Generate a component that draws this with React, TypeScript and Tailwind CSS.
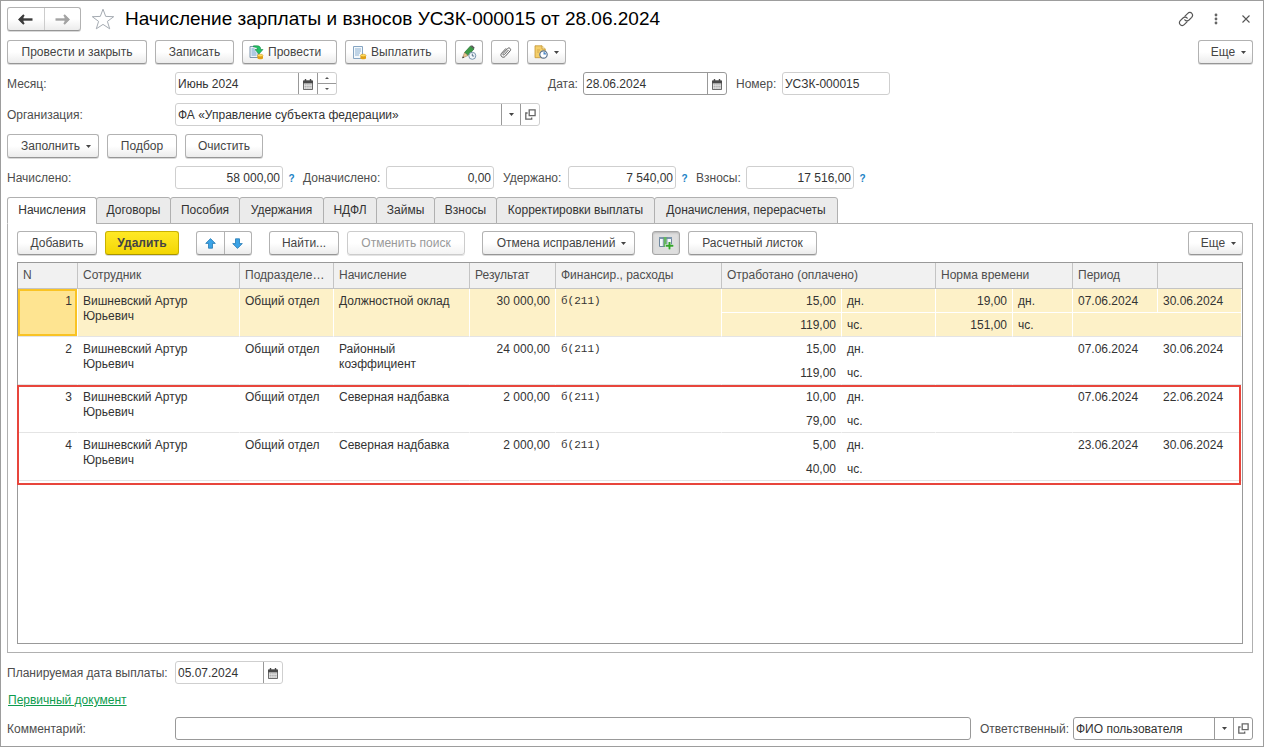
import React, { useState } from "react";

const BTN_FRAME =
  "flex h-6 shrink-0 items-center rounded-[3px] border border-[#b2b2b2] border-b-[#969696] bg-linear-to-b from-white from-50% to-[#ececec] whitespace-nowrap text-[#444] shadow-[0_1px_0_#d9d9d9]";
const BTN = `${BTN_FRAME} justify-center`;
const FIELD = "flex h-[23px] items-stretch overflow-hidden rounded-[3px] border bg-white";
const LIGHT = "border-[#cfcfcf]";
const DARK = "border-[#999]";
const INPUT = "w-full min-w-0 flex-1 bg-transparent px-0.5 pt-0.5 text-[#333] outline-none";
const LABEL = "shrink-0 pt-0.5 whitespace-nowrap";
const SEG = "flex w-[19px] shrink-0 items-center justify-center border-l border-[#999]";

function Caret() {
  return (
    <svg width="5" height="3" viewBox="0 0 5 3" className="shrink-0" aria-hidden="true">
      <path d="M0 0h5L2.500 3z" fill="#444" />
    </svg>
  );
}

function CalendarIcon() {
  return (
    <svg width="10" height="11" viewBox="0 0 10 11" className="mt-px mr-px" aria-hidden="true">
      <path d="M.8 1.500h8.400a.8.8 0 0 1 .8.800v7.900a.8.8 0 0 1-.8.800H.8a.8.8 0 0 1-.8-.8V2.300a.8.8 0 0 1 .8-.8z" fill="#6a6a6a" />
      <path d="M0 2.300a.8.8 0 0 1 .8-.8h8.400a.8.8 0 0 1 .8.800V4.300H0z" fill="#4a4a4a" />
      <path d="M2.500 0v3M7.500 0v3" stroke="#4a4a4a" strokeWidth="1.400" />
      <path d="M1 4.600h8v5.400H1z" fill="#f0f0f0" />
      <path d="M1.600 5.800h7M1.600 7.400h7M1.600 9h7" stroke="#8a8a8a" strokeWidth=".9" strokeDasharray="1.200 .7" />
    </svg>
  );
}

function OpenIcon() {
  return (
    <svg width="11" height="11" viewBox="0 0 11 11" fill="none" stroke="#666" strokeWidth="1.300" aria-hidden="true">
      <path d="M4.200.8h5.900v5.900H4.200z" />
      <path d="M2.600 4H.8v6.100h5.900V8.400" />
    </svg>
  );
}

function NavArrow({ color, flip }: { color: string; flip?: boolean }) {
  return (
    <svg width="15" height="11" viewBox="0 0 15 11" className={flip ? "-scale-x-100" : ""} aria-hidden="true">
      <path d="M14.500 5.500H3" stroke={color} strokeWidth="2.400" />
      <path d="M6 1 1.500 5.500 6 10" fill="none" stroke={color} strokeWidth="2" />
      <path d="M.5 5.500 5.500 1v9z" fill={color} />
    </svg>
  );
}

function Coins() {
  return (
    <g>
      <path d="M8.500 10.500v3c0 1 5.500 1 5.500 0v-3z" fill="#eaa91c" />
      <ellipse cx="11.200" cy="10.500" rx="2.800" ry="1.300" fill="#ffdc5c" stroke="#c98c10" strokeWidth=".5" />
      <path d="M8.500 12.200c0 1.200 5.500 1.200 5.500 0" fill="none" stroke="#c98c10" strokeWidth=".5" />
    </g>
  );
}

function PostIcon() {
  return (
    <svg width="15" height="15" viewBox="0 0 15 15" aria-hidden="true">
      <path d="M1 1.500h8v11H1z" fill="#eef4fa" stroke="#7d95ad" />
      <path d="M2.500 4h3M2.500 6h4M2.500 8h5M2.500 10h5" stroke="#6f9fca" />
      <path d="M4.500.8h3.700c2.500 0 3.500 1.200 3.500 3.700H14L10 9 6 4.500h2.300C8.300 2.600 7 1.900 4.500 2z" fill="#22c065" stroke="#118a43" strokeWidth=".6" />
      <Coins />
    </svg>
  );
}

function PayIcon() {
  return (
    <svg width="15" height="15" viewBox="0 0 15 15" aria-hidden="true">
      <path d="M1.500 1.500h9v12h-9z" fill="#f3f8fc" stroke="#86a5c2" />
      <path d="M3 4h6M3 6h6M3 8h5M3 10h4" stroke="#8bb0d1" />
      <Coins />
    </svg>
  );
}

function PencilClockIcon() {
  return (
    <svg width="16" height="15" viewBox="0 0 16 15" aria-hidden="true">
      <path d="M9.500 1 13 4 7 10.500 3.500 7.500z" fill="#3c9a47" stroke="#24702e" strokeWidth=".7" />
      <path d="M9.500 1 11 .3l2.600 2.200L13 4z" fill="#555" />
      <path d="m3.500 7.500 3.500 3L1.500 13z" fill="#e9c48d" stroke="#8a7250" strokeWidth=".5" />
      <path d="m1.200 13.200.8-2 1.200 1.200z" fill="#333" />
      <circle cx="11.300" cy="10.800" r="3.500" fill="#f2f7fb" stroke="#7894ac" />
      <path d="M11.300 8.600V11h1.900" fill="none" stroke="#58728a" />
    </svg>
  );
}

function ClipIcon() {
  return (
    <svg width="13" height="13" viewBox="0 0 13 13" fill="none" stroke="#5c5c5c" strokeWidth="1" strokeLinecap="round" aria-hidden="true">
      <path d="M9.300 4.200 5.300 8.600c-.9.900-2-.1-1.200-1.100l4.500-5c1.600-1.600 4 .5 2.600 2.300l-5 5.600c-2.300 2.400-5.700-.6-3.700-3.100L6.800 2.600" />
    </svg>
  );
}

function DocClockIcon() {
  return (
    <svg width="14" height="14" viewBox="0 0 14 14" aria-hidden="true">
      <path d="M1 .8h7L11.200 4v8.700H1z" fill="#f4cf6b" stroke="#c49632" strokeWidth=".8" />
      <path d="M8 .8V4h3.200" fill="#fdf0c4" stroke="#c49632" strokeWidth=".8" />
      <path d="M3 5h3M3 7h2" stroke="#d6a94a" />
      <circle cx="9.500" cy="9.500" r="3.700" fill="#fff" stroke="#5d7590" strokeWidth="1.200" />
      <path d="M9.500 7v2.500H12A2.500 2.500 0 0 0 9.500 7z" fill="#4a87c7" />
    </svg>
  );
}

function ColumnsIcon() {
  return (
    <svg width="16" height="14" viewBox="0 0 16 14" aria-hidden="true">
      <path d="M1.500 1.500h12v9h-12z" fill="#f4f8fb" stroke="#7089a0" />
      <path d="M1 1h13v2H1z" fill="#7c97ae" />
      <path d="M5.500 1h3.200v10H5.500z" fill="#63b85d" />
      <path d="M5.300 1v10M9 1v10" stroke="#7089a0" strokeWidth=".8" />
      <path d="M11.500 5.500v8.500M7.300 9.700h8.400" stroke="#f4f8fb" strokeWidth="3" />
      <path d="M11.500 6v7.600M7.800 9.700h7.600" stroke="#35a329" strokeWidth="2" />
    </svg>
  );
}

function BlueArrow({ down }: { down?: boolean }) {
  return (
    <svg width="11" height="11" viewBox="0 0 11 11" className={down ? "rotate-180" : ""} aria-hidden="true">
      <path d="M5.500.6 10.300 5.400H7.500v4.800h-4V5.400H.7z" fill="#3ba3e6" stroke="#2478b2" strokeWidth=".8" strokeLinejoin="round" />
    </svg>
  );
}

function MoreButton() {
  return (
    <button type="button" className={`${BTN} ml-auto w-[55px] gap-1.5 pl-1.5`}>
      Еще <Caret />
    </button>
  );
}

function Help() {
  return (
    <button type="button" aria-label="Справка" className="w-[17px] pt-px text-[10px] font-bold text-[#1b82c5]">
      ?
    </button>
  );
}

function Total({ id, label, value, labelWidth }: { id: string; label: string; value: string; labelWidth: string }) {
  return (
    <>
      <label htmlFor={id} className={`${LABEL} ${labelWidth}`}>{label}</label>
      <div className={`${FIELD} ${LIGHT} w-[108px]`}>
        <input id={id} readOnly value={value} className={`${INPUT} text-right`} />
      </div>
    </>
  );
}

const TABS = [
  { name: "Начисления", width: "w-[90px]" },
  { name: "Договоры", width: "w-[75px]" },
  { name: "Пособия", width: "w-[70px]" },
  { name: "Удержания", width: "w-[85px]" },
  { name: "НДФЛ", width: "w-[54px]" },
  { name: "Займы", width: "w-[59px]" },
  { name: "Взносы", width: "w-[63px]" },
  { name: "Корректировки выплаты", width: "w-[159px]" },
  { name: "Доначисления, перерасчеты", width: "w-[184px]" },
];

interface Accrual {
  kind: string[];
  sum: string;
  days: string;
  hours: string;
  normDays?: string;
  normHours?: string;
  from: string;
  to: string;
}

const ROWS: Accrual[] = [
  { kind: ["Должностной оклад"], sum: "30 000,00", days: "15,00", hours: "119,00", normDays: "19,00", normHours: "151,00", from: "07.06.2024", to: "30.06.2024" },
  { kind: ["Районный", "коэффициент"], sum: "24 000,00", days: "15,00", hours: "119,00", from: "07.06.2024", to: "30.06.2024" },
  { kind: ["Северная надбавка"], sum: "2 000,00", days: "10,00", hours: "79,00", from: "07.06.2024", to: "22.06.2024" },
  { kind: ["Северная надбавка"], sum: "2 000,00", days: "5,00", hours: "40,00", from: "23.06.2024", to: "30.06.2024" },
];

function Row({ row, index, selected, onSelect }: { row: Accrual; index: number; selected: boolean; onSelect: () => void }) {
  const base = "border-r px-[5px] pt-[5px] align-top leading-[15px]";
  const tone = selected ? "bg-[#fdf1c8] border-r-white" : "border-r-transparent";
  const cell = `${base} ${tone} border-b border-b-[#e4e4e4]`;
  const top = `${base} ${tone} ${selected ? "border-b border-b-white" : ""}`;
  const numberCell = selected
    ? `${base} border-r-white border-b border-b-[#e4e4e4] bg-[#fee491] text-right shadow-[inset_0_0_0_2px_#f9c324]`
    : `${cell} text-right`;
  return (
    <>
      <tr className="h-6" onClick={onSelect}>
        <td rowSpan={2} className={numberCell}>{index + 1}</td>
        <td rowSpan={2} className={cell}>Вишневский Артур<br />Юрьевич</td>
        <td rowSpan={2} className={cell}>Общий отдел</td>
        <td rowSpan={2} className={cell}>
          {row.kind.map((part) => <span key={part} className="block">{part}</span>)}
        </td>
        <td rowSpan={2} className={`${cell} text-right`}>{row.sum}</td>
        <td rowSpan={2} className={`${cell} font-['Liberation_Mono',monospace] text-[11px]`}>б(211)</td>
        <td className={`${top} text-right`}>{row.days}</td>
        <td className={top}>дн.</td>
        <td className={`${top} text-right`}>{row.normDays}</td>
        <td className={top}>{row.normDays && "дн."}</td>
        <td className={top}>{row.from}</td>
        <td className={top}>{row.to}</td>
      </tr>
      <tr className="h-6" onClick={onSelect}>
        <td className={`${cell} text-right`}>{row.hours}</td>
        <td className={cell}>чс.</td>
        <td className={`${cell} text-right`}>{row.normHours}</td>
        <td className={cell}>{row.normHours && "чс."}</td>
        <td colSpan={2} className={cell} />
      </tr>
    </>
  );
}

export default function App() {
  const [tab, setTab] = useState(0);
  const [selected, setSelected] = useState(0);
  const th = "border-r border-b border-[#c4c4c4] px-[5px] text-left font-normal whitespace-nowrap overflow-hidden text-ellipsis";

  return (
    <main className="flex min-h-screen flex-col gap-2 border border-[#9d9d9d] bg-white pt-[5px] pr-2.5 pb-1.5 pl-1.5 font-['Liberation_Sans',Arial,sans-serif] text-[12px] leading-[15px] text-[#4d4d4d]">
      <header className="flex h-[26px] items-center">
        <div className={`${BTN} w-[74px]`}>
          <button type="button" aria-label="Назад" className="flex h-full flex-1 items-center justify-center border-r border-[#ccc]">
            <NavArrow color="#3c3c3c" />
          </button>
          <button type="button" aria-label="Вперед" className="flex h-full flex-1 items-center justify-center">
            <NavArrow color="#a3a3a3" flip />
          </button>
        </div>
        <button type="button" aria-label="В избранное" className="ml-2.5 w-[34px]">
          <svg width="24" height="22" viewBox="0 0 24 22" fill="#fff" stroke="#a5abb2" strokeWidth="1">
            <path d="m12 1.200 2.700 7.200 8 .3-6.300 4.700 2.300 7.400-6.700-4.400-6.700 4.400 2.300-7.400L1.300 8.700l8-.3z" />
          </svg>
        </button>
        <h1 className="text-[19px] leading-6 whitespace-nowrap text-black">Начисление зарплаты и взносов УСЗК-000015 от 28.06.2024</h1>
        <div className="-mr-2 ml-auto flex items-center">
          <button type="button" aria-label="Ссылка" className="flex w-[30px] justify-center">
            <svg width="16" height="16" viewBox="0 0 16 16" fill="none" stroke="#555" strokeWidth="1.200" strokeLinecap="round">
              <path d="M7 5.200 9.800 2.300a2.700 2.700 0 0 1 4.100.2c1 1.300.8 2.700-.2 3.800L11 9c-1.300 1.200-3.100 1.100-4.200-.2" />
              <path d="m9 10.800-2.800 2.900a2.700 2.700 0 0 1-4.100-.2c-1-1.300-.8-2.700.2-3.800L5 7c1.300-1.200 3.100-1.100 4.200.2" />
            </svg>
          </button>
          <button type="button" aria-label="Меню" className="flex w-[30px] justify-center">
            <svg width="4" height="12" viewBox="0 0 4 12" fill="#666">
              <circle cx="2" cy="2" r="1.400" />
              <circle cx="2" cy="6" r="1.400" />
              <circle cx="2" cy="10" r="1.400" />
            </svg>
          </button>
          <button type="button" aria-label="Закрыть" className="flex w-[30px] justify-center">
            <svg width="8" height="8" viewBox="0 0 8 8" stroke="#555" strokeWidth="1.100">
              <path d="m.5.500 7 7m0-7-7 7" />
            </svg>
          </button>
        </div>
      </header>

      <div className="flex gap-2">
        <button type="button" className={`${BTN} w-[140px]`}>Провести и закрыть</button>
        <button type="button" className={`${BTN} w-[79px]`}>Записать</button>
        <button type="button" className={`${BTN_FRAME} w-[95px] gap-1 pl-1.5`}><PostIcon />Провести</button>
        <button type="button" className={`${BTN_FRAME} w-[102px] gap-1 pl-1.5`}><PayIcon />Выплатить</button>
        <button type="button" aria-label="Отложенное исправление" className={`${BTN} w-7`}><PencilClockIcon /></button>
        <button type="button" aria-label="Присоединенные файлы" className={`${BTN} w-7`}><ClipIcon /></button>
        <button type="button" aria-label="Отчеты" className={`${BTN} w-[39px] gap-1.5`}><DocClockIcon /><Caret /></button>
        <MoreButton />
      </div>

      <div className="flex items-center">
        <label htmlFor="month" className={`${LABEL} w-[168px]`}>Месяц:</label>
        <div className={`${FIELD} ${LIGHT} w-[162px]`}>
          <input id="month" defaultValue="Июнь 2024" className={INPUT} />
          <button type="button" aria-label="Выбрать месяц" className={SEG}><CalendarIcon /></button>
          <div className="flex w-[19px] flex-col border-l border-[#999]">
            <button type="button" aria-label="Следующий месяц" className="flex flex-1 items-center justify-center border-b border-[#999]">
              <svg width="4" height="2" viewBox="0 0 4 2"><path d="M0 2h4L2 0z" fill="#555" /></svg>
            </button>
            <button type="button" aria-label="Предыдущий месяц" className="flex flex-1 items-center justify-center">
              <svg width="4" height="2" viewBox="0 0 4 2"><path d="M0 0h4L2 2z" fill="#555" /></svg>
            </button>
          </div>
        </div>
        <label htmlFor="date" className={`${LABEL} ml-[211px] w-[35px]`}>Дата:</label>
        <div className={`${FIELD} ${DARK} w-36`}>
          <input id="date" defaultValue="28.06.2024" className={INPUT} />
          <button type="button" aria-label="Выбрать дату" className={SEG}><CalendarIcon /></button>
        </div>
        <label htmlFor="number" className={`${LABEL} ml-[9px] w-[46px]`}>Номер:</label>
        <div className={`${FIELD} ${LIGHT} w-[108px]`}>
          <input id="number" defaultValue="УСЗК-000015" className={INPUT} />
        </div>
      </div>

      <div className="flex items-center">
        <label htmlFor="org" className={`${LABEL} w-[168px]`}>Организация:</label>
        <div className={`${FIELD} ${LIGHT} w-[365px]`}>
          <input id="org" defaultValue="ФА «Управление субъекта федерации»" className={INPUT} />
          <button type="button" aria-label="Выбрать организацию" className={SEG}><Caret /></button>
          <button type="button" aria-label="Открыть организацию" className={SEG}><OpenIcon /></button>
        </div>
      </div>

      <div className="flex gap-2">
        <button type="button" className={`${BTN} w-[92px] gap-1.5 pl-1.5`}>Заполнить <Caret /></button>
        <button type="button" className={`${BTN} w-[70px]`}>Подбор</button>
        <button type="button" className={`${BTN} w-[78px]`}>Очистить</button>
      </div>

      <div className="flex items-center">
        <Total id="accrued" label="Начислено:" value="58 000,00" labelWidth="w-[168px]" />
        <Help />
        <Total id="extra" label="Доначислено:" value="0,00" labelWidth="ml-[3px] w-[83px]" />
        <Total id="withheld" label="Удержано:" value="7 540,00" labelWidth="ml-[9px] w-[65px]" />
        <Help />
        <Total id="fees" label="Взносы:" value="17 516,00" labelWidth="ml-[3px] w-[50px]" />
        <Help />
      </div>

      <section className="flex flex-1 flex-col">
        <div role="tablist" className="relative z-10 -mb-px flex h-[27px]">
          {TABS.map((t, i) => (
            <button
              key={t.name}
              type="button"
              role="tab"
              aria-selected={i === tab}
              onClick={() => setTab(i)}
              className={`${t.width} -ml-px flex-none rounded-t-[3px] border border-[#b0b0b0] whitespace-nowrap text-[#333] first:ml-0 ${
                i === tab ? "border-b-white bg-white" : "bg-[#ebebeb]"
              }`}
            >
              {t.name}
            </button>
          ))}
        </div>

        <div className="flex flex-1 flex-col gap-[7px] border border-[#b0b0b0] px-[9px] pt-[7px] pb-2">
          <div className="flex">
            <button type="button" className={`${BTN} w-20`}>Добавить</button>
            <button type="button" className="ml-2 h-6 w-[74px] shrink-0 rounded-[3px] border border-[#c9b100] border-b-[#a89400] bg-linear-to-b from-[#ffe924] to-[#f3d600] font-bold text-[#444] shadow-[0_1px_0_#d9d9d9]">
              Удалить
            </button>
            <div className={`${BTN} ml-[17px] w-14`}>
              <button type="button" aria-label="Вверх" className="flex h-full flex-1 items-center justify-center border-r border-[#b2b2b2]"><BlueArrow /></button>
              <button type="button" aria-label="Вниз" className="flex h-full flex-1 items-center justify-center"><BlueArrow down /></button>
            </div>
            <button type="button" className={`${BTN} ml-[17px] w-[70px]`}>Найти...</button>
            <button type="button" disabled className="ml-2 h-6 w-[118px] shrink-0 rounded-[3px] border border-[#ccc] bg-linear-to-b from-white from-50% to-[#f3f3f3] text-[#999] shadow-[0_1px_0_#e4e4e4]">
              Отменить поиск
            </button>
            <button type="button" className={`${BTN} ml-[17px] w-[153px] gap-1.5 pl-1.5`}>Отмена исправлений <Caret /></button>
            <button type="button" aria-label="Настройка колонок" aria-pressed="true" className="ml-[17px] flex h-6 w-7 shrink-0 items-center justify-center rounded-[3px] border border-[#a6a6a6] bg-[#dedede] shadow-[inset_0_1px_2px_#b5b5b5]">
              <ColumnsIcon />
            </button>
            <button type="button" className={`${BTN} ml-2 w-[129px]`}>Расчетный листок</button>
            <MoreButton />
          </div>

          <div className="relative flex-1 border border-[#999]">
            <table className="w-full table-fixed border-separate border-spacing-0 text-[#333]">
              <colgroup>
                <col className="w-[60px]" />
                <col className="w-[162px]" />
                <col className="w-[94px]" />
                <col className="w-[136px]" />
                <col className="w-[86px]" />
                <col className="w-[166px]" />
                <col className="w-[120px]" />
                <col className="w-[94px]" />
                <col className="w-[77px]" />
                <col className="w-[60px]" />
                <col className="w-[85px]" />
                <col />
              </colgroup>
              <thead>
                <tr className="h-[26px] bg-[#f1f1f1] text-[#4d4d4d]">
                  <th className={th}>N</th>
                  <th className={th}>Сотрудник</th>
                  <th className={th}>Подразделение</th>
                  <th className={th}>Начисление</th>
                  <th className={th}>Результат</th>
                  <th className={th}>Финансир., расходы</th>
                  <th colSpan={2} className={th}>Отработано (оплачено)</th>
                  <th colSpan={2} className={th}>Норма времени</th>
                  <th className={th}>Период</th>
                  <th className="border-b border-[#c4c4c4]" aria-label="Окончание периода" />
                </tr>
              </thead>
              <tbody>
                {ROWS.map((row, i) => (
                  <Row key={i} row={row} index={i} selected={i === selected} onSelect={() => setSelected(i)} />
                ))}
              </tbody>
            </table>
            <div className="pointer-events-none absolute top-[122px] right-px -left-px h-[100px] border-2 border-[#e8453c]" />
          </div>
        </div>
      </section>

      <div className="flex items-center">
        <label htmlFor="payday" className={`${LABEL} w-[168px]`}>Планируемая дата выплаты:</label>
        <div className={`${FIELD} ${LIGHT} w-[108px]`}>
          <input id="payday" defaultValue="05.07.2024" className={INPUT} />
          <button type="button" aria-label="Выбрать дату выплаты" className={SEG}><CalendarIcon /></button>
        </div>
      </div>

      <div className="flex h-[17px] items-center pl-px">
        <a href="#document" className="text-[#0d9b4e] underline">Первичный документ</a>
      </div>

      <div className="flex items-center">
        <label htmlFor="comment" className={`${LABEL} w-[168px]`}>Комментарий:</label>
        <div className={`${FIELD} ${DARK} flex-1`}>
          <input id="comment" className={INPUT} />
        </div>
        <label htmlFor="responsible" className={`${LABEL} ml-[9px] w-[93px]`}>Ответственный:</label>
        <div className={`${FIELD} ${DARK} w-[180px]`}>
          <input id="responsible" defaultValue="ФИО пользователя" className={INPUT} />
          <button type="button" aria-label="Выбрать ответственного" className={SEG}><Caret /></button>
          <button type="button" aria-label="Открыть ответственного" className={SEG}><OpenIcon /></button>
        </div>
      </div>
    </main>
  );
}
